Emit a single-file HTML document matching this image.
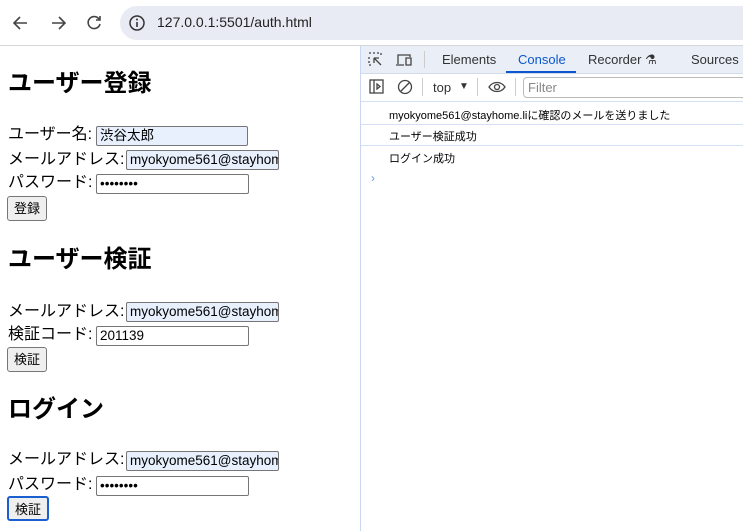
<!DOCTYPE html><html><head><meta charset="utf-8"><style>
*{box-sizing:border-box}
body{margin:0;width:743px;height:531px;overflow:hidden;background:#fff;font-family:"Liberation Sans","Noto Sans CJK JP",sans-serif;position:relative;color:#000}
.a{position:absolute;white-space:nowrap}
h1{position:absolute;margin:0;font-size:24px;font-weight:bold;left:8px;line-height:28px}
.l{position:absolute;left:8px;font-size:16px;line-height:20px}
.i{position:absolute;height:20px;border:1px solid #767676;border-radius:2px;font-size:13.5px;line-height:18px;padding-left:3px;overflow:hidden;background:#fff}
.f{background:#e8f0fe}
.b{position:absolute;left:7px;height:25px;border:1px solid #767676;border-radius:3px;background:#efefef;font-size:13px;line-height:23px;padding:0 6px}
.d{font-size:11px;position:absolute;left:389px}
.sep{position:absolute;left:361px;right:0;height:1px;background:#d3e0f5}
</style></head><body>
<div class="a" style="left:0;top:0;width:743px;height:46px;background:#fff"></div>
<svg class="a" style="left:12px;top:13px" width="100" height="20" viewBox="0 0 100 20" fill="none" stroke="#444" stroke-width="1.6">
<path d="M15 10H3M8 4L2 10l6 6"/><path d="M40 10h12M47 4l6 6-6 6"/><path d="M87 6a6 6 0 1 0 1 5M88 3v4h-4"/></svg>
<div class="a" style="left:120px;top:6px;width:640px;height:34px;border-radius:17px;background:#e9ebf4"></div>
<svg class="a" style="left:128px;top:14px" width="18" height="18" viewBox="0 0 18 18"><circle cx="9" cy="9" r="7" fill="none" stroke="#333" stroke-width="1.5"/><path d="M9 8v5" stroke="#333" stroke-width="1.6"/><circle cx="9" cy="5.5" r="1" fill="#333"/></svg>
<div class="a" style="left:157px;top:14px;font-size:14px;color:#222">127.0.0.1:5501/auth.html</div>
<div class="a" style="left:0;top:45px;width:743px;height:1px;background:#d6d6d6"></div>

<h1 style="top:70px">ユーザー登録</h1>
<div class="l" style="top:125px">ユーザー名:</div><div class="i f" style="left:96px;top:126px;width:152px">渋谷太郎</div>
<div class="l" style="top:150px">メールアドレス:</div><div class="i f" style="left:126px;top:150px;width:153px">myokyome561@stayhome.li</div>
<div class="l" style="top:173px">パスワード:</div><div class="i" style="left:96px;top:174px;width:153px">••••••••</div>
<div class="b" style="top:196px">登録</div>

<h1 style="top:246px">ユーザー検証</h1>
<div class="l" style="top:302px">メールアドレス:</div><div class="i f" style="left:126px;top:302px;width:153px">myokyome561@stayhome.li</div>
<div class="l" style="top:325px">検証コード:</div><div class="i" style="left:96px;top:326px;width:153px">201139</div>
<div class="b" style="top:347px">検証</div>

<h1 style="top:396px">ログイン</h1>
<div class="l" style="top:450px">メールアドレス:</div><div class="i f" style="left:126px;top:451px;width:153px">myokyome561@stayhome.li</div>
<div class="l" style="top:475px">パスワード:</div><div class="i" style="left:96px;top:476px;width:153px">••••••••</div>
<div class="b" style="top:496px;border:2px solid #1a5fd0">検証</div>

<div class="a" style="left:360px;top:46px;width:1px;height:485px;background:#c9d7f0"></div>
<div class="a" style="left:361px;top:46px;width:382px;height:27px;background:#e9eef7"></div>
<svg class="a" style="left:368px;top:52px" width="50" height="16" viewBox="0 0 50 16" fill="none" stroke="#444" stroke-width="1.3"><path d="M1 1h2M5 1h2M9 1h2M1 5v2M1 9v2M1 13h2M13 1v2" /><path d="M6 6l7 7M6 6h5M6 6v5"/><path d="M30 12V3h12v2M28 13h8M38 6h5v7h-5z"/></svg>
<div class="a" style="left:424px;top:51px;width:1px;height:17px;background:#ccc"></div>
<div class="a" style="left:442px;top:52px;font-size:13px;color:#333">Elements</div>
<div class="a" style="left:518px;top:52px;font-size:13px;color:#0b57d0">Console</div>
<div class="a" style="left:506px;top:71px;width:70px;height:2px;background:#0b57d0"></div>
<div class="a" style="left:588px;top:52px;font-size:13px;color:#333">Recorder ⚗</div>
<div class="a" style="left:691px;top:52px;font-size:13px;color:#333">Sources</div>
<div class="a" style="left:361px;top:73px;width:382px;height:1px;background:#d3dbe8"></div>
<svg class="a" style="left:369px;top:79px" width="140" height="16" viewBox="0 0 140 16" fill="none" stroke="#444" stroke-width="1.3"><rect x="1" y="1" width="13" height="13"/><path d="M5 1v13M8 5l3 2.5L8 10z"/><circle cx="36" cy="8" r="6.5"/><path d="M31.5 12.5l9-9"/><path d="M120 8c4-6 12-6 16 0c-4 6-12 6-16 0z"/><circle cx="128" cy="8" r="2.5"/></svg>
<div class="a" style="left:422px;top:78px;width:1px;height:18px;background:#ccc"></div>
<div class="a" style="left:433px;top:80px;font-size:13px;color:#333">top</div>
<div class="a" style="left:459px;top:81px;font-size:10px;color:#333">▼</div>
<div class="a" style="left:477px;top:78px;width:1px;height:18px;background:#ccc"></div>
<div class="a" style="left:515px;top:78px;width:1px;height:18px;background:#ccc"></div>
<div class="a" style="left:523px;top:77px;width:230px;height:21px;border:1px solid #bbb;border-radius:4px;padding-left:4px;font-size:13px;line-height:19px;color:#888">Filter</div>
<div class="sep" style="top:101px"></div>
<div class="d" style="top:107px">myokyome561@stayhome.liに確認のメールを送りました</div>
<div class="sep" style="top:124px"></div>
<div class="d" style="top:128px">ユーザー検証成功</div>
<div class="sep" style="top:145px"></div>
<div class="d" style="top:150px">ログイン成功</div>
<div class="a" style="left:371px;top:171px;font-size:12px;color:#6a9ae8">›</div>
</body></html>
